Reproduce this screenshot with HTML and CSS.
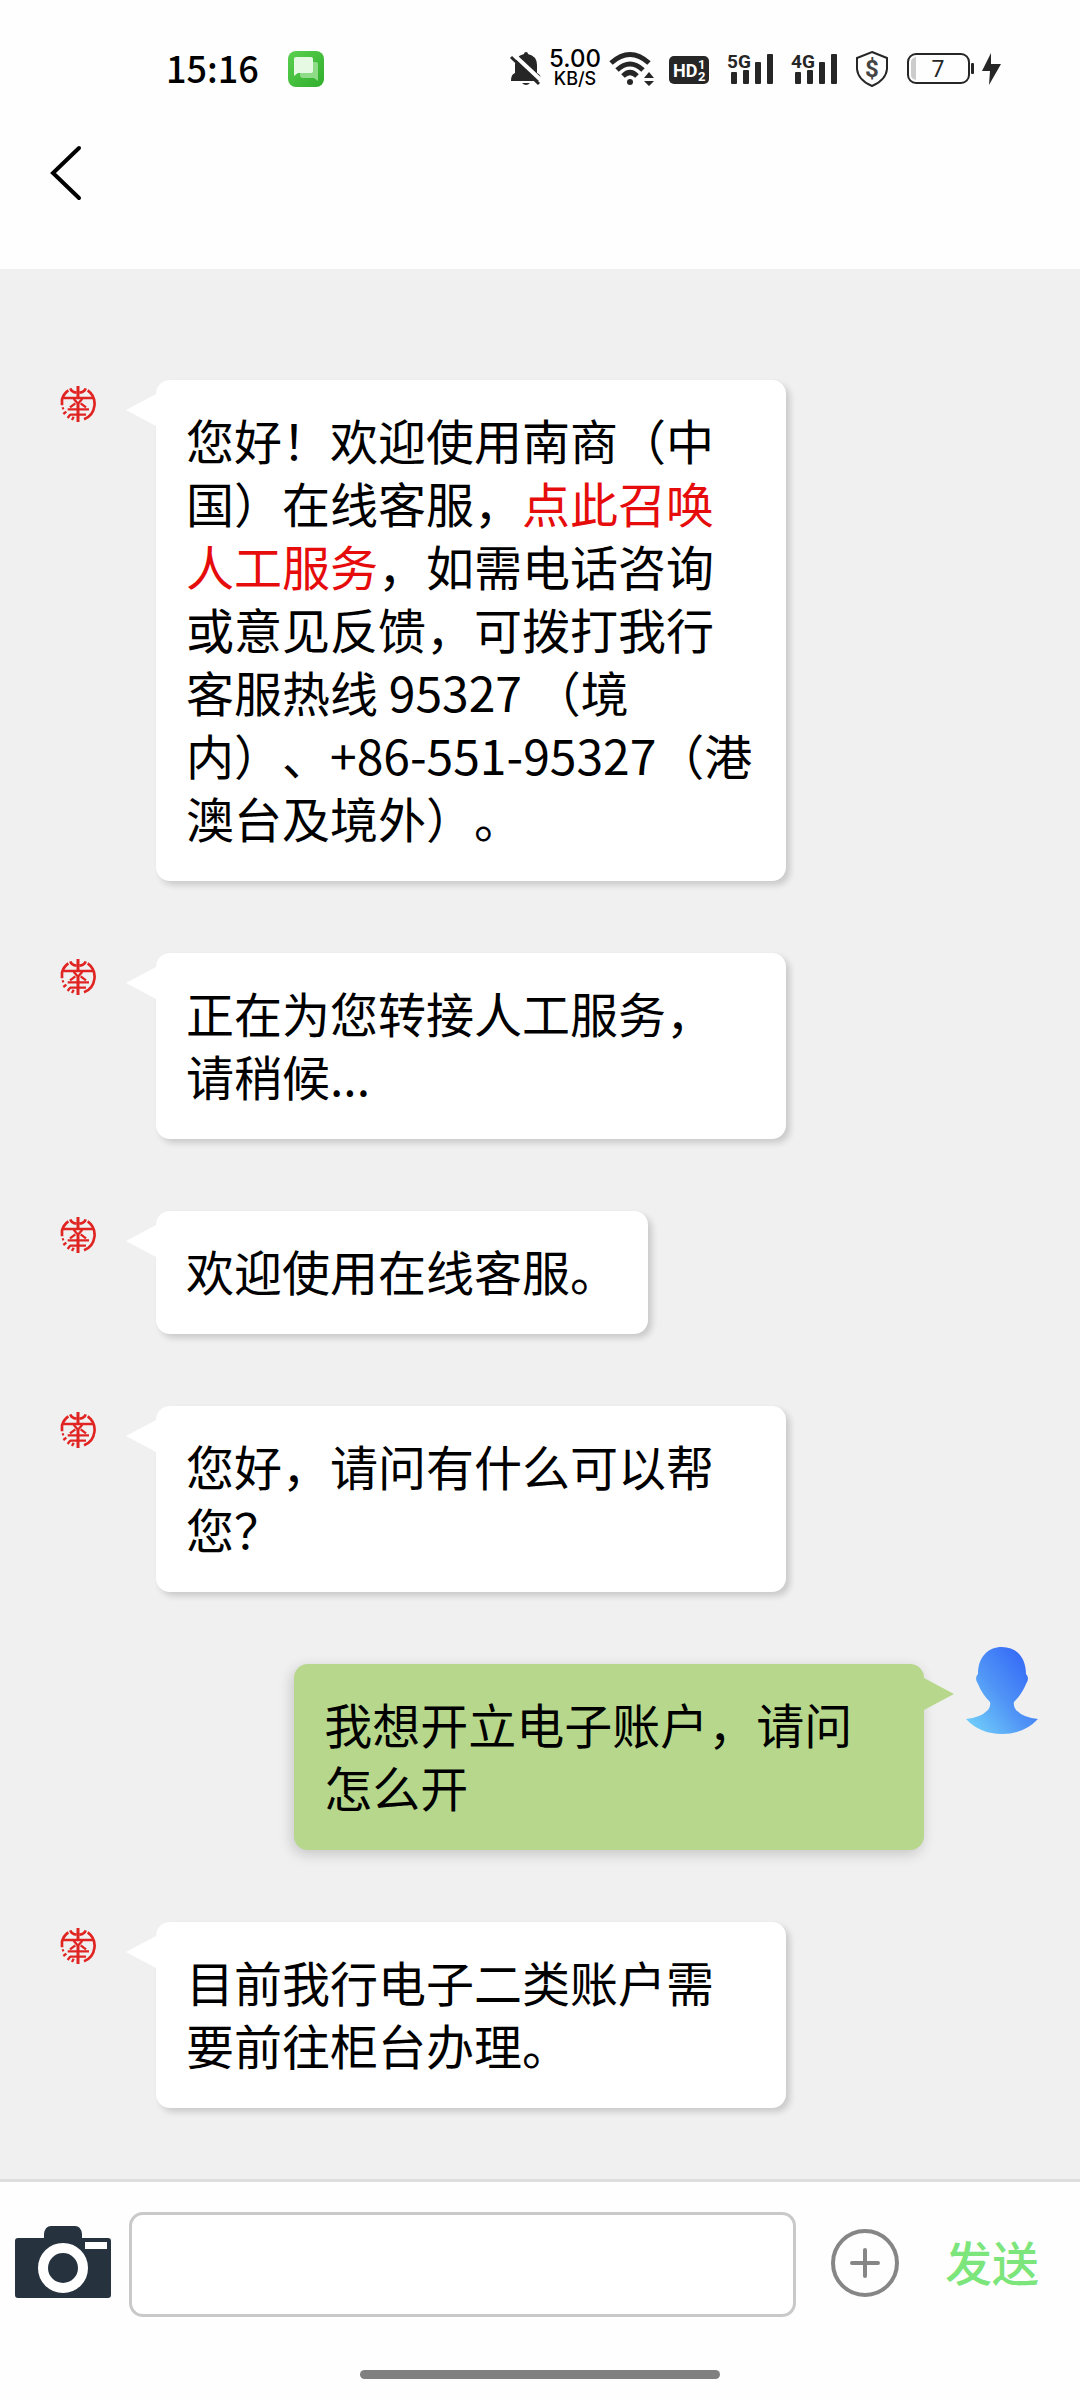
FILE: index.html
```html
<!DOCTYPE html>
<html lang="zh-CN">
<head>
<meta charset="utf-8">
<meta name="viewport" content="width=device-width, initial-scale=1">
<title>在线客服</title>
<link rel="stylesheet" href="styles.css">
</head>
<body>
<svg class="sprite" aria-hidden="true">
  <symbol id="bank-logo" viewBox="0 0 108 108">
    <g fill="none" stroke="#e02422" stroke-width="8">
      <path d="M25 13A50 50 0 0 0 6 40V58M83 13A50 50 0 0 1 72 100"/>
      <path stroke-width="7" d="M6 68l6-2M10 84l9-7M23 96l8-11M36 102l5-10"/>
      <path stroke-width="9" d="M54 0V34M54 54V108"/>
      <path d="M31 7Q34 18 50 20M77 7Q74 18 58 20M8 36H100"/>
      <path stroke-width="7" d="M41 38L54 53L67 38M46 52L30 64M62 52L78 64M23 70H87M30 86H78"/>
    </g>
  </symbol>
</svg>

<header class="top">
  <div class="status">
    <span class="clock">15:16</span>
    <svg class="app-icon" width="36" height="36" viewBox="0 0 36 36" aria-hidden="true">
      <defs><linearGradient id="app-green" x1="0" y1="0" x2="1" y2="1"><stop offset="0" stop-color="#5bd04f"/><stop offset="1" stop-color="#2fae2c"/></linearGradient></defs>
      <rect width="36" height="36" rx="8" fill="url(#app-green)"/>
      <path d="M13 11h15q2 0 2 2v17l-4-3H15q-3 0-3-3z" fill="#8edb88"/>
      <path d="M8 6h15q2 0 2 2v12q0 2-2 2H10l-4 3V8q0-2 2-2z" fill="#e6f9e3"/>
    </svg>
    <div class="indicators">
      <svg width="32" height="36" viewBox="0 0 32 36" fill="#262626" aria-hidden="true">
        <path d="M16 1q2 0 2 2 9 2 9 11v8q4 1 4 8H1q0-7 4-8v-8q0-9 9-11 0-2 2-2z"/>
        <path d="M12 32h8q-4 4-8 0z"/>
        <path d="M3 3L33 31" stroke="#fff" stroke-width="4"/><path d="M1 6L29 33" stroke="#262626" stroke-width="3"/>
      </svg>
      <div class="speed"><span class="rate">5.00</span><span class="unit">KB/S</span></div>
      <svg class="wifi" width="46" height="36" viewBox="0 0 46 36" fill="none" stroke="#262626" stroke-width="5" aria-hidden="true">
        <path d="M2 12Q21-5 40 12M8 19Q21 7 34 19M14 25Q21 18 28 25"/>
        <circle cx="21" cy="31" r="3" fill="#262626" stroke="none"/>
        <path d="M35 27h10l-5-6zM35 30h10l-5 5z" fill="#262626" stroke="none"/>
      </svg>
      <svg class="hd" width="40" height="36" viewBox="0 0 40 36" aria-hidden="true">
        <rect y="5" width="40" height="28" rx="5" fill="#262626"/>
        <text class="hd-text" x="4" y="26">HD</text><text class="hd-num" x="29" y="18">1</text><text class="hd-num" x="29" y="30">2</text>
      </svg>
      <svg class="signal" width="48" height="36" viewBox="0 0 48 36" fill="#262626" aria-hidden="true">
        <text class="net" x="0" y="17">5G</text>
        <rect x="4" y="21" width="6" height="12" rx="1"/><rect x="16" y="19" width="6" height="14" rx="1"/><rect x="28" y="11" width="6" height="22" rx="1"/><rect x="40" y="3" width="6" height="30" rx="1"/>
      </svg>
      <svg class="signal" width="48" height="36" viewBox="0 0 48 36" fill="#262626" aria-hidden="true">
        <text class="net" x="0" y="17">4G</text>
        <rect x="4" y="21" width="6" height="12" rx="1"/><rect x="16" y="19" width="6" height="14" rx="1"/><rect x="28" y="11" width="6" height="22" rx="1"/><rect x="40" y="3" width="6" height="30" rx="1"/>
      </svg>
      <svg class="shield" width="34" height="36" viewBox="0 0 34 36" aria-hidden="true">
        <path d="M17 1L32 7V18Q31 29 17 35Q3 29 2 18V7z" fill="none" stroke="#262626" stroke-width="2"/>
        <text class="dollar" x="17" y="26">$</text>
      </svg>
      <svg class="battery" width="96" height="36" viewBox="0 0 96 36" aria-hidden="true">
        <rect x="1" y="3" width="61" height="29" rx="8" fill="none" stroke="#262626" stroke-width="2"/>
        <path d="M9 6v23Q4 28 4 24V11Q4 7 9 6z" fill="#ccc"/>
        <rect x="64" y="12" width="3" height="11" rx="1" fill="#262626"/>
        <text class="charge" x="31" y="26">7</text>
        <path d="M84 2L75 20H83L82 34L94 13H84z" fill="#262626"/>
      </svg>
    </div>
  </div>
  <nav class="nav">
    <button class="back" type="button" aria-label="返回">
      <svg width="34" height="58" viewBox="0 0 34 58" fill="none" stroke="#000" stroke-width="4" stroke-linecap="round"><path d="M31 4L5 29L31 54"/></svg>
    </button>
  </nav>
</header>

<main class="chat">
  <article class="message">
    <svg class="logo" aria-hidden="true"><use href="#bank-logo"/></svg>
    <p class="bubble">您好！欢迎使用南商（中国）在线客服，<a href="#agent">点此召唤人工服务</a>，如需电话咨询或意见反馈，可拨打我行客服热线 95327 （境内）、+86-551-95327（港澳台及境外）。</p>
  </article>
  <article class="message">
    <svg class="logo" aria-hidden="true"><use href="#bank-logo"/></svg>
    <p class="bubble">正在为您转接人工服务，请稍候...</p>
  </article>
  <article class="message">
    <svg class="logo" aria-hidden="true"><use href="#bank-logo"/></svg>
    <p class="bubble">欢迎使用在线客服。</p>
  </article>
  <article class="message">
    <svg class="logo" aria-hidden="true"><use href="#bank-logo"/></svg>
    <p class="bubble">您好，请问有什么可以帮您？</p>
  </article>
  <article class="message mine">
    <p class="bubble">我想开立电子账户，请问怎么开</p>
    <svg class="avatar" width="72" height="88" viewBox="0 0 72 88" aria-hidden="true">
      <defs><linearGradient id="person-blue" x1="0.9" y1="0.2" x2="0.1" y2="0.95"><stop offset="0" stop-color="#356bf7"/><stop offset="0.5" stop-color="#5094f6"/><stop offset="1" stop-color="#70cdfa"/></linearGradient></defs>
      <path d="M36 1C50 1 60 11 60 28Q64 32 60 38Q56 48 48 56Q47 60 50 64Q58 72 72 73Q58 88 36 88Q14 88 0 73Q14 72 22 64Q25 60 24 56Q16 48 12 38Q8 32 12 28C12 11 22 1 36 1z" fill="url(#person-blue)"/>
    </svg>
  </article>
  <article class="message">
    <svg class="logo" aria-hidden="true"><use href="#bank-logo"/></svg>
    <p class="bubble">目前我行电子二类账户需要前往柜台办理。</p>
  </article>
</main>

<footer class="bottom">
  <form class="composer">
    <button class="camera" type="button" aria-label="拍照">
      <svg width="96" height="74" viewBox="0 0 96 74">
        <path d="M3 12H29V8Q30 0 36 0H60Q66 0 67 8V12H93Q96 12 96 15V69Q96 72 93 72H3Q0 72 0 69V15Q0 12 3 12z" fill="#26333f"/>
        <ellipse cx="48" cy="42" rx="20" ry="20" fill="none" stroke="#fff" stroke-width="10"/>
        <rect x="70" y="16" width="22" height="7" fill="#fff"/>
      </svg>
    </button>
    <input class="entry" type="text" aria-label="输入消息">
    <button class="more" type="button" aria-label="更多">
      <svg width="70" height="70" viewBox="0 0 70 70" fill="none" stroke="#868686" stroke-width="4" stroke-linecap="round"><circle cx="35" cy="35" r="32"/><path d="M35 22V48M22 35H48"/></svg>
    </button>
    <button class="send" type="submit">发送</button>
  </form>
  <div class="home-bar"></div>
</footer>
</body>
</html>
```

FILE: styles.css
```css
* { box-sizing: border-box; }

body {
  margin: 0;
  min-height: 100vh;
  display: flex;
  flex-direction: column;
  background: #fefefe;
  color: #000;
  font-family: "Noto Sans CJK SC", sans-serif;
  text-spacing-trim: space-all;
}

svg { display: block; flex: none; overflow: visible; }

button {
  padding: 0;
  border: 0;
  background: none;
  font-family: inherit;
}

.sprite { position: absolute; width: 0; height: 0; }

/* Status bar */
.status {
  display: flex;
  align-items: center;
  height: 138px;
  padding: 0 77px 0 166px;
}

.clock {
  padding-bottom: 4px;
  font-size: 36px;
  font-weight: 500;
  line-height: 36px;
}

.app-icon { margin-left: 29px; }

.indicators {
  display: flex;
  align-items: center;
  margin-left: auto;
}

.speed {
  display: flex;
  flex-direction: column;
  align-items: center;
  width: 54px;
  margin: 0 7px 0 6px;
  font-family: Inter, sans-serif;
  font-weight: 500;
}

.rate { font-size: 24px; line-height: 20px; }
.unit { font-size: 18px; line-height: 20px; }

.hd { margin-left: 14px; }
.signal { margin-left: 18px; }
.signal + .signal { margin-left: 16px; }
.shield { margin-left: 16px; }
.battery { margin-left: 18px; }

.hd-text, .hd-num, .net, .dollar, .charge {
  font-family: Roboto, sans-serif;
  font-weight: 700;
}

.hd-text { font-size: 18px; fill: #fff; }
.hd-num { font-size: 13px; fill: #fff; }
.net { font-size: 19px; }
.dollar { font-size: 24px; text-anchor: middle; fill: #444; }
.charge { font-size: 23px; font-weight: 400; text-anchor: middle; fill: #262626; }

.nav {
  height: 131px;
  padding: 6px 0 0 48px;
}

/* Conversation */
.chat {
  flex: 1;
  display: flex;
  flex-direction: column;
  gap: 72px;
  padding: 111px 0 71px;
  background: #f0f0f0;
}

.message {
  display: grid;
  grid-template-columns: 156px 1fr 156px;
  align-items: start;
}

.logo {
  width: 36px;
  height: 36px;
  margin: 6px 0 0 60px;
}

.bubble {
  position: relative;
  justify-self: start;
  grid-column: 2;
  max-width: 82%;
  margin: 0;
  padding: 28px 30px 32px;
  border-radius: 14px;
  background: #fff;
  box-shadow: 4px 4px 6px rgba(0, 0, 0, 0.16);
  font-size: 48px;
  line-height: 63px;
}

.bubble::before {
  content: "";
  position: absolute;
  top: 14px;
  right: 100%;
  border: solid transparent;
  border-width: 16px 30px 16px 0;
  border-right-color: #fff;
}

.bubble a { color: #e60c0c; text-decoration: none; }

.mine .bubble {
  justify-self: end;
  background: #b7d88c;
  box-shadow: -2px 4px 14px rgba(0, 0, 0, 0.18);
}

.mine .bubble::before {
  right: auto;
  left: 100%;
  border-width: 16px 0 16px 30px;
  border-color: transparent transparent transparent #b7d88c;
}

.avatar { margin: -18px 0 0 42px; }

/* Message entry */
.bottom { border-top: 3px solid #dedede; }

.composer {
  display: flex;
  align-items: center;
  height: 105px;
  margin: 30px 41px 0 15px;
}

.entry {
  flex: 1;
  min-width: 0;
  height: 105px;
  margin: 0 34px 0 18px;
  padding: 0 24px;
  border: 3px solid #c9c9c9;
  border-radius: 14px;
  background: #fff;
  font: inherit;
  font-size: 48px;
}

.camera, .more { padding-bottom: 3px; }

.send {
  margin-left: 45px;
  padding-bottom: 8px;
  color: #7ce57c;
  font-size: 47px;
  font-weight: 500;
  line-height: 64px;
}

.home-bar {
  width: 360px;
  height: 9px;
  margin: 53px auto 21px;
  border-radius: 5px;
  background: #808080;
}
```
